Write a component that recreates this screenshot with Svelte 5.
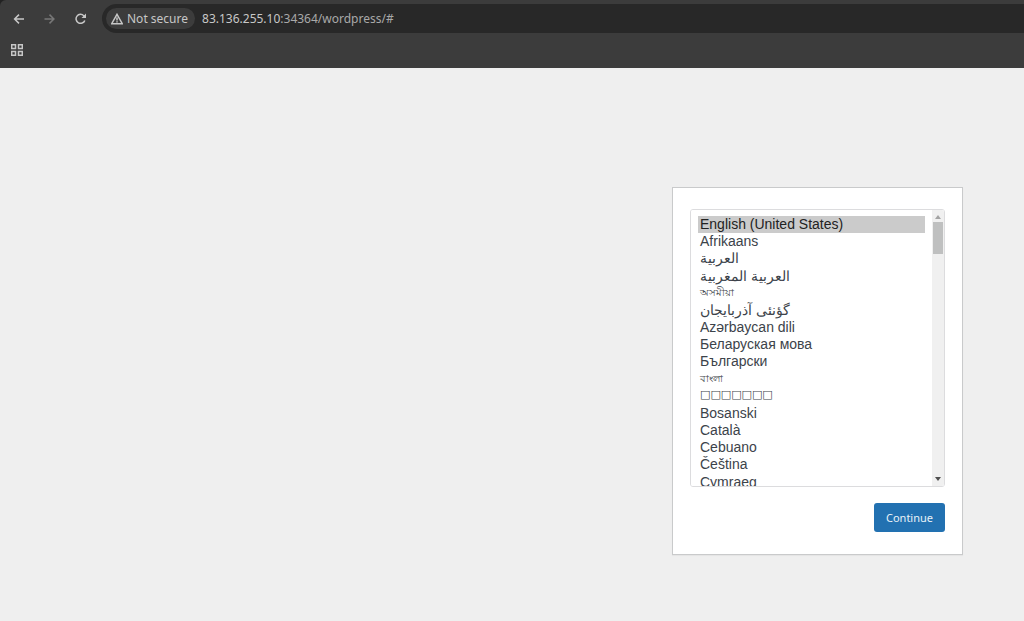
<script>
  const languages = [
    { code: 'en_US', name: 'English (United States)' },
    { code: 'af', name: 'Afrikaans' },
    { code: 'ar', name: 'العربية', tall: true },
    { code: 'ary', name: 'العربية المغربية' },
    { code: 'as', name: 'অসমীয়া', small: true },
    { code: 'azb', name: 'گؤنئی آذربایجان' },
    { code: 'az', name: 'Azərbaycan dili' },
    { code: 'bel', name: 'Беларуская мова' },
    { code: 'bg_BG', name: 'Български', tall: true },
    { code: 'bn_BD', name: 'বাংলা', small: true },
    { code: 'bo', name: '□□□□□□□', boxes: true },
    { code: 'bs_BA', name: 'Bosanski' },
    { code: 'ca', name: 'Català' },
    { code: 'ceb', name: 'Cebuano' },
    { code: 'cs_CZ', name: 'Čeština', tall: true },
    { code: 'cy', name: 'Cymraeg' },
    { code: 'da_DK', name: 'Dansk' },
    { code: 'de_DE', name: 'Deutsch' },
    { code: 'de_AT', name: 'Deutsch (Österreich)' },
    { code: 'el', name: 'Ελληνικά' },
    { code: 'en_AU', name: 'English (Australia)' },
    { code: 'en_CA', name: 'English (Canada)' },
    { code: 'en_GB', name: 'English (UK)' },
    { code: 'eo', name: 'Esperanto' },
    { code: 'es_ES', name: 'Español' },
    { code: 'et', name: 'Eesti' },
    { code: 'eu', name: 'Euskara' },
    { code: 'fi', name: 'Suomi' },
    { code: 'fr_FR', name: 'Français' },
    { code: 'gl_ES', name: 'Galego' },
    { code: 'hr', name: 'Hrvatski' },
    { code: 'hu_HU', name: 'Magyar' },
    { code: 'it_IT', name: 'Italiano' },
    { code: 'nl_NL', name: 'Nederlands' },
    { code: 'pl_PL', name: 'Polski' },
    { code: 'pt_PT', name: 'Português' }
  ];

  let language = 'en_US';
  let address = ':34364/wordpress/#';
</script>

<header class="browser">
  <div class="toolbar">
    <button class="nav" type="button" aria-label="Back">
      <svg viewBox="0 0 12 12"><path d="M11 6H1.8M6 1.6L1.6 6L6 10.4" /></svg>
    </button>
    <button class="nav" type="button" aria-label="Forward" disabled>
      <svg viewBox="0 0 12 12"><path d="M.5 6H9.7M5.5 1.6L9.9 6L5.5 10.4" /></svg>
    </button>
    <button class="nav" type="button" aria-label="Reload">
      <svg viewBox="0 0 12 12">
        <path d="M9.8 7.4A4.5 4.5 0 1 1 8.8 2.7L10 4" />
        <path class="solid" d="M11 .6V5.1H6.5Z" />
      </svg>
    </button>
    <div class="omnibox">
      <button class="security" type="button">
        <svg viewBox="0 0 12 12"><path d="M6 1.3L11.3 10.7H.7ZM6 4.6V7.4M6 8.3V9.5" /></svg>
        Not secure
      </button>
      <a class="url" href="#top"><span class="host">83.136.255.10</span>{address}</a>
    </div>
  </div>
  <div class="bookmarks">
    <button class="apps" type="button" aria-label="Apps">
      <svg viewBox="0 0 12 12">
        <path d="M.7 .7H4.5V4.5H.7ZM7.5 .7H11.3V4.5H7.5ZM.7 7.5H4.5V11.3H.7ZM7.5 7.5H11.3V11.3H7.5Z" />
      </svg>
    </button>
  </div>
</header>

<main>
  <form class="setup" on:submit|preventDefault>
    <div class="list">
      <select id="language" size="16" aria-label="Select a default language" bind:value={language}>
        {#each languages as lang}
          <option value={lang.code} class:tall={lang.tall} class:small={lang.small} class:boxes={lang.boxes}>{lang.name}</option>
        {/each}
      </select>
      <div class="scrollbar" aria-hidden="true">
        <span class="arrow up"></span>
        <span class="thumb"></span>
        <span class="arrow down"></span>
      </div>
    </div>
    <button class="continue" type="submit">Continue</button>
  </form>
</main>

<style>
  :global(body) {
    margin: 0;
    background: #efefef;
    font-family: "Noto Sans", sans-serif;
  }

  button {
    margin: 0;
    padding: 0;
    border: 0;
    background: none;
    font-family: inherit;
  }

  svg {
    display: block;
    width: 12px;
    height: 12px;
    fill: none;
    stroke: currentColor;
    stroke-width: 1.5;
  }

  .solid {
    fill: currentColor;
    stroke: none;
  }

  .browser {
    background: #222;
    color: #c7c7c7;
  }

  .toolbar {
    display: flex;
    align-items: center;
    padding-top: 4px;
    padding-left: 3px;
    border-top-left-radius: 6px;
    background: #3c3c3c;
  }

  .nav {
    display: grid;
    place-items: center;
    width: 31px;
    height: 28px;
    color: #c7c7c7;
  }

  .nav:disabled {
    color: #777;
  }

  .omnibox {
    display: flex;
    flex: 1;
    align-items: center;
    gap: 7px;
    height: 29px;
    margin-left: 6px;
    padding-left: 4px;
    border-radius: 15px 0 0 15px;
    background: #282828;
  }

  .security {
    display: flex;
    align-items: center;
    gap: 4px;
    height: 21px;
    padding: 0 7px 0 5px;
    border-radius: 11px;
    background: #3c3c3c;
    color: #c7c7c7;
    font-size: 12px;
  }

  .url {
    color: #a8a8a8;
    font-size: 12px;
    text-decoration: none;
  }

  .host {
    color: #c7c7c7;
  }

  .bookmarks {
    display: flex;
    align-items: center;
    height: 34px;
    padding-bottom: 1px;
    padding-left: 11px;
    background: #3c3c3c;
  }

  .apps {
    color: #c7c7c7;
  }

  main {
    display: flex;
    justify-content: flex-end;
    padding: 119px 61px 64px 16px;
  }

  .setup {
    display: flex;
    flex-direction: column;
    align-items: flex-end;
    box-sizing: border-box;
    width: 291px;
    padding: 21px 17px 22px;
    border: 1px solid #c9cacb;
    background: #fff;
    box-shadow: 0 1px 1px rgba(0, 0, 0, 0.04);
  }

  .list {
    position: relative;
    width: 100%;
  }

  select {
    display: block;
    box-sizing: border-box;
    width: 100%;
    height: 278px;
    padding: 6px 19px 6px 7px;
    border: 1px solid #dcdcde;
    border-radius: 3px;
    outline: none;
    background: #fff;
    color: #3c434a;
    font-family: "Liberation Sans", Arial, sans-serif;
    font-size: 14px;
    overflow-y: scroll;
    scrollbar-width: none;
  }

  option {
    box-sizing: border-box;
    height: 17px;
    min-height: 17px;
    padding: 0 2px;
    line-height: 17px;
  }

  option.tall {
    height: 18px;
  }

  option.small {
    font-size: 10px;
    line-height: 14px;
  }

  option.boxes {
    font-family: "DejaVu Sans", sans-serif;
    font-size: 11px;
  }

  option:checked {
    background: #cbcbcb linear-gradient(#cbcbcb, #cbcbcb);
    color: #222;
  }

  .scrollbar {
    position: absolute;
    top: 1px;
    right: 1px;
    bottom: 1px;
    display: flex;
    flex-direction: column;
    align-items: center;
    box-sizing: border-box;
    width: 12px;
    padding: 5px 0;
    border-radius: 0 2px 2px 0;
    background: #f0f0f0;
    pointer-events: none;
  }

  .arrow {
    border: 3px solid transparent;
  }

  .up {
    border-top: 0;
    border-bottom: 4px solid #a3a3a3;
  }

  .down {
    margin-top: auto;
    border-top: 4px solid #505050;
    border-bottom: 0;
  }

  .thumb {
    width: 10px;
    height: 32px;
    margin-top: 3px;
    background: #bfc0c0;
  }

  .continue {
    height: 29px;
    margin-top: 16px;
    padding: 0 12px;
    border-radius: 3px;
    background: #2271b1;
    color: #e8f1f8;
    font-size: 11px;
  }
</style>
